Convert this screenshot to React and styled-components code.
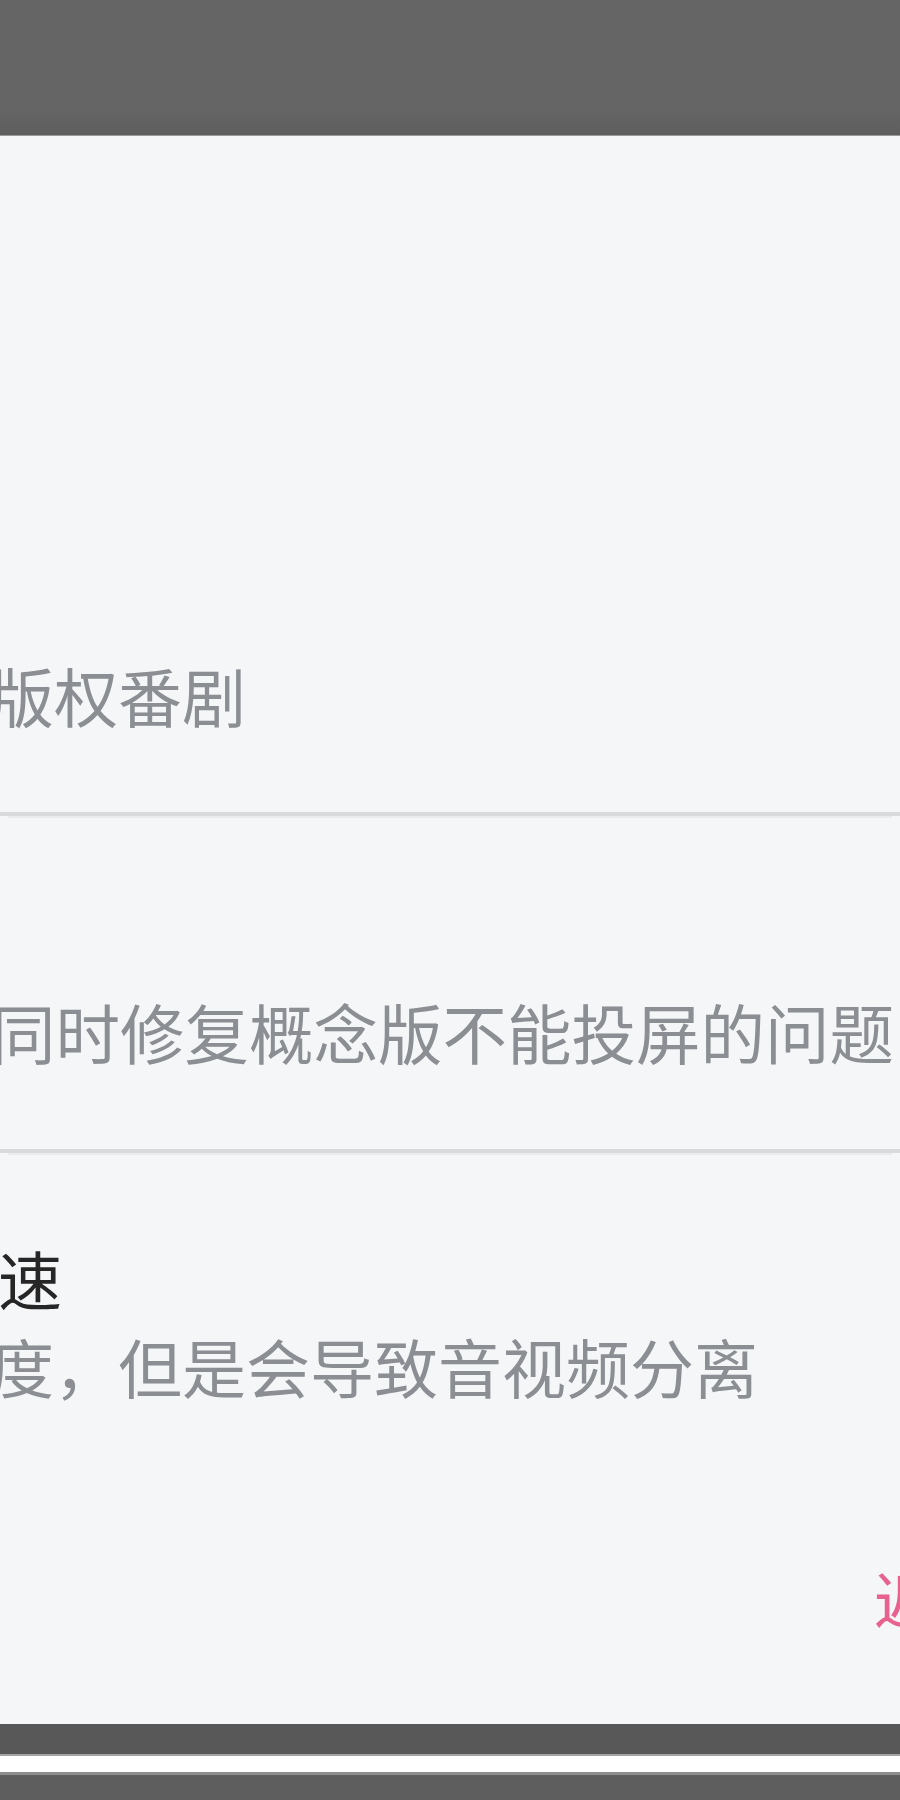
import styled, { createGlobalStyle } from "styled-components";

const GlobalStyle = createGlobalStyle`
  html, body {
    margin: 0;
    padding: 0;
    background: #5e5e5e;
  }
  body {
    font-family: "Noto Sans CJK SC", "Noto Sans", sans-serif;
  }
`;

const Screen = styled.div`
  width: 900px;
  height: 1800px;
  overflow: hidden;
  display: flex;
  flex-direction: column;
`;

const Scrim = styled.div`
  height: 135px;
  flex-shrink: 0;
  background: linear-gradient(#656565 80%, #5e5e5e);
  border-bottom: 1px solid #9a9a9a;
`;

const Dialog = styled.div`
  height: 1588px;
  flex-shrink: 0;
  background: #f5f6f8;
  display: flex;
  flex-direction: column;
  overflow: hidden;
`;

const Item = styled.div`
  height: ${(p) => p.height}px;
  flex-shrink: 0;
  display: flex;
  flex-direction: column;
  padding-top: ${(p) => p.top}px;
  box-sizing: border-box;
  border-bottom: ${(p) => (p.last ? "none" : "4px solid #d9dadc")};
  box-shadow: ${(p) => (p.last ? "none" : "0 10px 0 -8px #eaebed")};
`;

const Title = styled.div`
  flex-shrink: 0;
  font-size: 64px;
  line-height: 88px;
  height: 88px;
  color: #262626;
  white-space: nowrap;
  margin-left: ${(p) => p.offset}px;
`;

const Summary = styled.div`
  flex-shrink: 0;
  font-size: ${(p) => p.size || 64}px;
  line-height: 88px;
  height: ${(p) => p.clip || 88}px;
  overflow: hidden;
  color: #8b8e93;
  white-space: nowrap;
  margin-left: ${(p) => p.offset}px;
`;

const Actions = styled.div`
  flex: 1;
  display: flex;
  padding: 145px 0 0 874px;
`;

const ActionButton = styled.div`
  font-size: 62px;
  line-height: 88px;
  color: #e8628f;
  white-space: nowrap;
`;

const BottomBar = styled.div`
  height: 30px;
  flex-shrink: 0;
  background: #585858;
`;

const NavStripe = styled.div`
  height: 16px;
  flex-shrink: 0;
  background: #ffffff;
  border-top: 2px solid #a4a4a4;
  border-bottom: 3px solid #8e8e8e;
`;

const NavBar = styled.div`
  flex: 1;
  background: #5e5e5e;
`;

export default function App() {
  return (
    <>
      <GlobalStyle />
      <Screen>
        <Scrim />
        <Dialog>
          <Item height={680} top={514}>
            <Summary offset={-10}>版权番剧</Summary>
          </Item>
          <Item height={337} top={171}>
            <Summary offset={-9} size={64.5}>同时修复概念版不能投屏的问题</Summary>
          </Item>
          <Item last height={255} top={80}>
            <Title offset={-2}>速</Title>
            <Summary offset={-10} clip={86}>度，但是会导致音视频分离</Summary>
          </Item>
          <Actions>
            <ActionButton>返回</ActionButton>
          </Actions>
        </Dialog>
        <BottomBar />
        <NavStripe />
        <NavBar />
      </Screen>
    </>
  );
}
